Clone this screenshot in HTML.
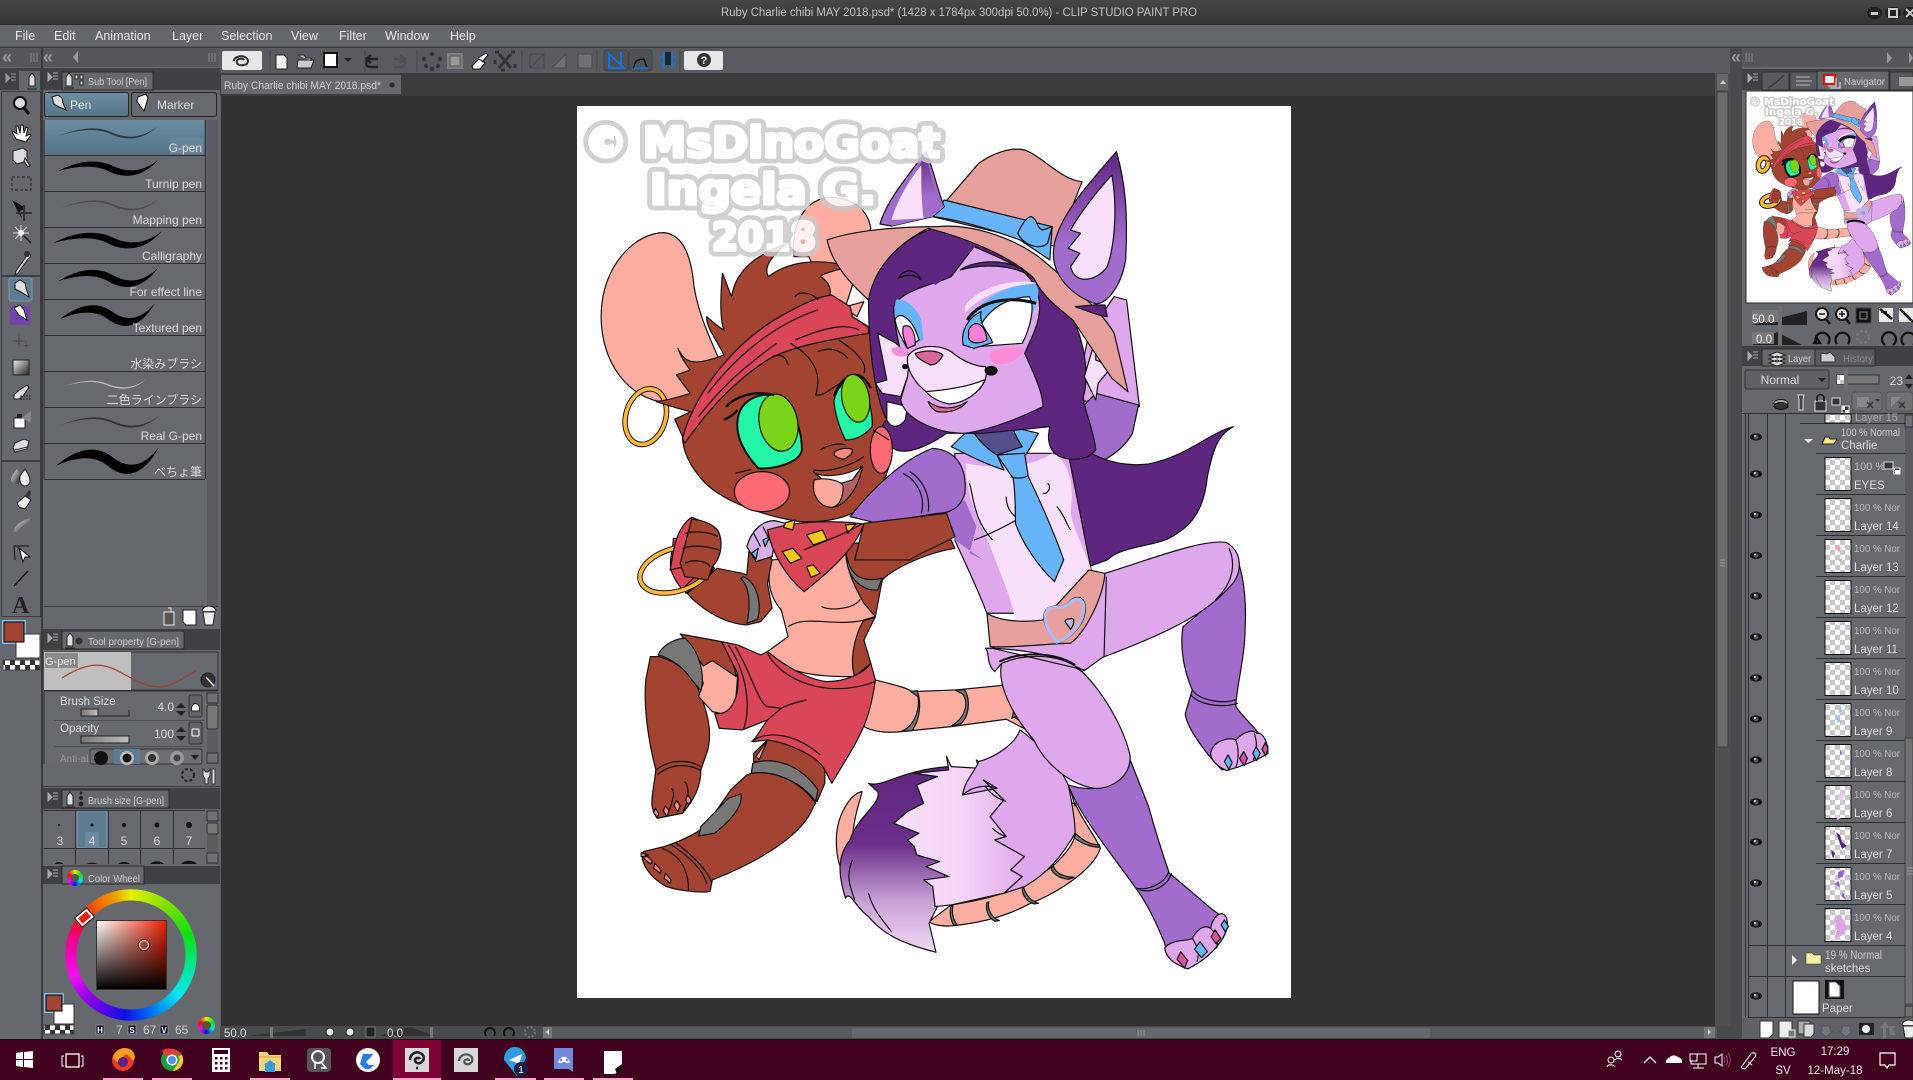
<!DOCTYPE html>
<html><head><meta charset="utf-8"><title>CLIP STUDIO PAINT PRO</title>
<style>
html,body{margin:0;padding:0;background:#5f6166;width:1913px;height:1080px;overflow:hidden}
svg{position:absolute;left:0;top:0}
text{font-family:"Liberation Sans","Noto Sans CJK JP",sans-serif;font-size:12px;fill:#d8d8d8}
.m{font-size:12.5px;fill:#e8e8e8}
.s{font-size:10px;fill:#c8c8c8}
.l{font-size:12px;fill:#dcdcdc}
.r{text-anchor:end}
.n{font-size:10.5px;fill:#bdbdbd}
.w{font-family:"DejaVu Sans",sans-serif;font-weight:bold;fill:#fff;stroke:#c9c9c9;paint-order:stroke;stroke-linejoin:round}
.w2{font-family:"DejaVu Sans",sans-serif;font-weight:bold;fill:#fff;stroke:#fff;stroke-linejoin:round}
#art *{vector-effect:non-scaling-stroke;stroke-linejoin:round}
#art{stroke:#111}
.wheel{position:absolute;border-radius:50%}
</style></head><body>
<svg width="1913" height="1080" viewBox="0 0 1913 1080" xmlns="http://www.w3.org/2000/svg">
<defs>
<linearGradient id="ts" x1="0" x2="0" y1="0" y2="1"><stop offset="0" stop-color="#474747"/><stop offset="1" stop-color="#343434"/></linearGradient>
<linearGradient id="gs" x1="0" x2="0" y1="0" y2="1"><stop offset="0" stop-color="#6d8ea2"/><stop offset="1" stop-color="#547488"/></linearGradient>
<linearGradient id="earg" x1="0" x2="0" y1="0" y2="1"><stop offset="0" stop-color="#5f2680"/><stop offset=".6" stop-color="#a26ccc"/><stop offset="1" stop-color="#a26ccc"/></linearGradient>
<linearGradient id="td" x1="0" x2="0" y1="0" y2="1"><stop offset="0" stop-color="#5f2680"/><stop offset=".42" stop-color="#6a2f88"/><stop offset=".72" stop-color="#c7a0d6"/><stop offset="1" stop-color="#f0d8f2"/></linearGradient>
<linearGradient id="tl" x1="0" x2="1" y1="0" y2="0"><stop offset="0" stop-color="#f8dffa"/><stop offset=".55" stop-color="#f4d4f6"/><stop offset="1" stop-color="#e0a8ec"/></linearGradient>
<linearGradient id="gray" x1="0" x2="1" y1="0" y2="1"><stop offset="0" stop-color="#eee"/><stop offset="1" stop-color="#222"/></linearGradient>
<linearGradient id="sl" x1="0" x2="1" y1="0" y2="0"><stop offset="0" stop-color="#777"/><stop offset="1" stop-color="#c0c0c0"/></linearGradient>
<pattern id="ck" width="10" height="10" patternUnits="userSpaceOnUse"><rect width="10" height="10" fill="#fff"/><rect width="5" height="5" fill="#c8c8c8"/><rect x="5" y="5" width="5" height="5" fill="#c8c8c8"/></pattern>
<pattern id="ck2" width="10" height="10" patternUnits="userSpaceOnUse"><rect width="10" height="10" fill="#fff"/><rect width="5" height="5" fill="#333"/><rect x="5" y="5" width="5" height="5" fill="#333"/></pattern>
<path id="st1" d="M0 11C25 2 40 1 55 8C70 14 85 13 100 1C85 15 70 16 55 10C40 3 25 3.500 0 11Z"/>
<path id="st2" d="M0 11C22 0 40-1 55 6C70 13 85 12 100 0C85 17 68 19 52 12C40 5 22 5 0 11Z"/>
<g id="eye"><ellipse rx="6" ry="3.6" fill="#111"/><circle r="2.4" fill="#555"/><circle cx="-1" cy="-1" r=".9" fill="#fff"/></g>
<g id="art">
<g transform="translate(570,100) scale(.4592,.3333)">
<!-- raised arm behind head -->
<path fill="#e0a8ec" d="M1185 590L1212 600L1240 920L1100 900L1130 700Z"/>
<path fill="#a26ccc" d="M1145 880L1238 915L1225 1000C1200 1060 1150 1100 1085 1115L1060 1000Z"/>
<!-- back hair -->
<path fill="#5f2680" d="M1090 1020C1130 1060 1180 1105 1260 1092C1340 1072 1390 1000 1445 980C1410 1005 1400 1050 1388 1130C1380 1250 1340 1290 1300 1318C1260 1340 1200 1340 1170 1380L1130 1400L1090 1230L1060 1080Z"/>
<!-- back ear of mouse -->
<path fill="#feaea0" d="M488 470C480 380 510 292 570 292C625 295 650 340 655 385L600 620L640 605L625 650L560 590L520 470Z"/>
<!-- big ear -->
<path fill="#feaea0" d="M195 905C110 880 65 760 68 640C70 500 140 398 205 398C250 405 265 480 270 560C280 640 300 700 322 770L270 890Z"/>
<!-- hoop -->
<ellipse cx="165" cy="950" rx="44" ry="84" transform="rotate(8 165 950)" fill="none" stroke="#111" stroke-width="5.5"/>
<ellipse cx="165" cy="950" rx="44" ry="84" transform="rotate(8 165 950)" fill="none" stroke="#fcb83f" stroke-width="3.6"/>
<g transform="translate(0,1320)">
<!-- mouse tail -->
<path fill="#feaea0" d="M665 420C690 430 730 440 745 455L840 450L945 436C960 480 972 520 965 530C980 540 985 550 995 570L950 538L830 560L720 575C690 580 660 575 640 560Z"/>
<path fill="#777" d="M742 455L758 470C762 510 750 560 720 575L745 572C762 540 766 490 756 452Z"/>
<path fill="#777" d="M838 450L855 462C870 490 860 535 830 558L850 552C870 530 872 480 860 450Z"/>
<path fill="#777" d="M942 436C965 470 970 510 962 535L972 530C975 500 965 450 950 436Z"/>
<path fill="#feaea0" d="M1100 790C1115 840 1140 880 1155 925C1140 990 1060 1060 1000 1092C950 1130 890 1150 830 1158C800 1160 785 1150 782 1145L830 1095C900 1080 970 1060 1040 990C1070 960 1100 910 1100 880L1090 790Z"/>
<path fill="#feaea0" d="M636 755C610 760 580 830 580 900C580 940 585 970 590 985L615 900C618 830 630 790 636 755Z"/>
<path fill="#777" d="M1102 882C1120 905 1135 915 1153 915L1152 922C1130 920 1110 908 1098 892Z"/>
<path fill="#777" d="M1052 978C1058 1000 1075 1012 1098 1012L1085 1018C1065 1015 1050 1000 1048 985Z"/>
<path fill="#777" d="M988 1042C992 1065 1005 1085 1020 1090L1010 1092C995 1085 985 1065 985 1048Z"/>
<path fill="#777" d="M912 1086C908 1110 920 1135 935 1142L925 1144C908 1130 905 1105 908 1088Z"/>
<path fill="#777" d="M834 1098C830 1120 836 1145 844 1156L836 1156C828 1140 826 1115 830 1098Z"/>
<!-- right leg of Charlie -->
<path fill="#a26ccc" d="M1435 20C1460 50 1475 150 1470 270C1470 350 1450 450 1450 500C1470 540 1500 570 1520 620C1510 650 1450 680 1420 690C1390 650 1340 560 1340 520L1355 450C1330 370 1330 300 1335 260C1400 190 1440 130 1435 20Z"/>
<path fill="none" d="M1355 450C1370 480 1420 495 1452 478M1352 465C1370 495 1420 505 1454 490"/>
<path fill="#e0a8ec" d="M1395 640C1400 600 1440 590 1450 600C1470 570 1490 570 1495 580C1510 575 1520 610 1520 640C1500 660 1460 680 1430 692C1410 680 1395 660 1395 640Z"/>
<path fill="none" d="M1450 600C1458 630 1455 665 1450 682M1490 580C1498 610 1495 640 1488 660"/>
<path fill="#6ab4fa" d="M1433 645L1442 668L1435 688L1425 665Z"/><path fill="#d8529c" d="M1467 635L1475 655L1468 678L1458 655Z"/><path fill="#6ab4fa" d="M1494 620L1503 640L1495 662L1487 640Z"/><path fill="#d8529c" d="M1514 608L1520 625L1515 648L1507 628Z"/>
<path fill="#e0a8ec" d="M1165 100C1260 60 1380-5 1430 8C1470 40 1460 110 1440 135C1400 200 1340 260 1160 352L1120 392C1050 340 990 330 920 325Z"/>
<path fill="none" d="M1168 110L1163 350M1435 25C1450 70 1445 130 1405 180"/>
<!-- Charlie tail -->
<path fill="url(#td)" d="M650 730C680 745 720 690 825 680L860 750L800 1100L782 1150L797 1237C720 1210 680 1180 650 1130C620 1100 610 1050 600 1075C585 1010 580 950 610 900C625 830 680 790 670 755Z"/>
<path fill="url(#tl)" d="M820 650L830 680L890 685L885 660L910 690L950 650L900 720L945 780L915 830L950 890L925 900L990 950L960 990L985 1010L945 1060L830 1095L795 1100L790 1040L770 1020L825 1010L775 980L805 965L755 945L750 920L735 900L760 880L705 850L735 815L770 790L755 735L800 710L750 700L825 690Z"/>
<path fill="#e0a8ec" d="M980 570C1040 630 1070 690 1085 735C1095 800 1100 850 1100 880C1070 950 1040 1000 990 1040L945 1060L985 1010L960 990L990 950L925 900L950 890L915 830L945 780L900 720L930 745L855 765C860 720 880 700 890 665C930 650 970 610 980 570Z" />
<path fill="none" d="M855 765C880 735 910 735 930 745M905 740C920 770 940 780 950 785M920 865C930 880 940 885 950 890"/>
<path fill="none" d="M650 1060C660 1110 680 1140 700 1175M615 960C600 1010 610 1040 620 1080"/>
<!-- Charlie front leg -->
<path fill="#a26ccc" d="M1085 735C1130 755 1190 755 1220 660L1260 800C1280 900 1300 980 1305 1000C1350 1050 1390 1100 1400 1110L1430 1140C1440 1180 1400 1250 1345 1285C1310 1270 1300 1250 1295 1210C1280 1160 1260 1100 1240 1060C1190 960 1110 830 1085 735Z"/>
<path fill="none" d="M1240 1050C1270 1060 1300 1040 1310 1000M1232 1045C1262 1052 1295 1030 1304 995M1100 800L1090 750"/>
<path fill="#e0a8ec" d="M1295 1225C1310 1195 1350 1205 1355 1195C1370 1160 1385 1155 1395 1165C1400 1130 1420 1105 1430 1135C1440 1180 1400 1250 1345 1287C1310 1270 1298 1250 1295 1225Z"/>
<path fill="none" d="M1355 1195C1370 1225 1370 1250 1365 1265M1395 1165C1410 1185 1412 1210 1408 1225"/>
<path fill="#d8529c" d="M1330 1235L1345 1262L1338 1285L1322 1258Z"/><path fill="#6ab4fa" d="M1372 1205L1388 1235L1375 1253L1360 1228Z"/><path fill="#d8529c" d="M1405 1170L1417 1195L1407 1212L1396 1190Z"/><path fill="#6ab4fa" d="M1425 1140L1434 1160L1427 1175L1418 1155Z"/>
<path fill="#e0a8ec" d="M940 370C1000 330 1080 360 1115 395C1170 470 1210 580 1220 650C1220 720 1170 750 1140 745C1080 730 1030 660 1010 600C960 520 930 430 940 370Z"/>
<path fill="#e0a8ec" d="M920 325L1120 390L1115 395C1080 345 1000 335 940 370L925 395C905 370 915 340 905 325Z"/>
<path fill="none" stroke-width="2" d="M935 365C990 330 1060 340 1100 375"/>
<!-- Ruby lower legs -->
<path fill="#a24431" d="M175 350L195 350C240 370 270 410 280 450C300 520 310 570 300 630L285 690C285 740 270 780 245 820L190 835C170 800 180 770 187 690C170 600 160 500 165 420Z"/>
<path fill="none" d="M187 690C220 655 260 660 285 680M190 705C220 668 260 672 285 692M215 815C225 780 230 750 220 745M245 820C260 780 260 740 250 725"/>
<path fill="#fd8a90" d="M256 765L264 780L258 795L252 780Z M232 782L240 797L235 815L226 797Z M208 798L216 812L211 830L203 812Z M186 805L193 820L190 834L182 818Z"/>
<path fill="#feaea0" d="M280 370L325 305L365 410L358 530L310 515L280 470L290 430Z"/>
<path fill="#a24431" d="M240 282L330 305C350 340 360 390 362 410L310 362L290 378L250 300Z"/>
<path fill="#777" d="M192 345C205 305 240 295 250 295C280 330 295 400 285 452L265 420C250 385 220 355 192 345Z"/>
<path fill="#a24431" d="M400 640L430 600C500 610 540 650 555 690L555 730L538 785C500 700 440 670 400 665Z"/>
<path fill="#feaea0" d="M405 650L430 600L412 660Z"/>
<path fill="#a24431" d="M395 700C440 690 500 720 535 790L530 800C510 880 420 960 310 1020L305 1055C280 1060 230 1050 210 1040C170 1010 150 960 160 935L205 920C250 900 290 870 300 850L350 750L385 705Z"/>
<path fill="#777" d="M398 670C440 650 500 670 540 750L535 785C500 720 440 690 395 700Z"/>
<path fill="#777" d="M372 762C378 800 350 840 315 880L280 888L285 860L345 775Z"/>
<path fill="none" d="M230 908C270 950 300 990 308 1028M218 912C260 950 290 990 298 1032M200 925C240 945 258 990 258 1050"/>
<path fill="#fd8a90" d="M185 970L198 990L197 1000L182 985Z M208 1000L220 1020L218 1030L205 1015Z M165 945L180 965L175 972L160 955Z M155 938L170 945L170 950L155 950Z"/>
<!-- Ruby torso -->
<path fill="#a24431" d="M600 10L830 0L838 25C770 40 700 90 680 120L665 230L640 300L655 370L620 410L600 350L600 100Z"/>
<path fill="#feaea0" d="M440 60C430 100 428 160 460 210L475 290L430 335C450 380 500 410 600 410L620 410C610 370 615 300 640 240L665 230L640 190C620 140 605 100 600 40Z"/>
<path fill="none" d="M548 200C570 215 620 205 632 178M475 260C520 220 580 270 665 232M600 10C600 60 610 110 650 148L680 118"/>
<path fill="#777" d="M603 50C610 100 630 130 680 115L670 150C630 155 600 100 603 50Z"/>
<path fill="#d94657" d="M330 305L365 315L415 345L430 335C470 380 520 420 560 425C600 425 640 400 655 370L665 420C655 520 640 570 605 650L570 730L555 690C540 650 480 610 430 600L398 605L430 540L375 570L325 565L315 520C355 530 370 460 365 400C350 360 340 330 330 305Z"/>
<path fill="none" d="M430 340C460 420 560 480 665 425M395 605C430 570 490 580 545 645M460 505C480 490 500 485 515 480M345 315C385 400 395 500 378 568M360 320C395 400 410 490 430 500L460 505L430 540"/>
<path fill="#a24431" d="M385 105L375 100L320 85L300 110L255 160C280 200 330 250 385 255L415 245L440 205L430 130L440 60L420-5L392 0Z"/>
<path fill="#777" d="M378 110C410 130 418 200 408 238L385 250C395 190 390 140 372 115Z"/>
<path fill="#d94657" d="M252 160C275 140 300 110 315 85L302 70L250 140ZM220 90C230 130 245 150 255 160L295 100L300-5L225-5C225 30 215 60 220 90Z"/>
<ellipse cx="230" cy="90" rx="60" ry="85" transform="rotate(55 230 90)" fill="none" stroke="#111" stroke-width="5.5"/>
<ellipse cx="230" cy="90" rx="60" ry="85" transform="rotate(55 230 90)" fill="none" stroke="#fcb83f" stroke-width="3.6"/>
</g>
<!-- fist top portion -->
<path fill="#d94657" d="M218 1410C225 1370 225 1290 265 1252L280 1260L250 1400Z"/>
<path fill="#a24431" d="M240 1390L265 1258C295 1260 320 1280 325 1300C335 1340 325 1380 310 1400L300 1440L250 1430Z"/>
<path fill="none" d="M250 1300C280 1290 310 1300 322 1310M245 1345C280 1330 310 1345 325 1350M250 1390C270 1375 300 1385 305 1400"/>
<!-- Ruby head -->
<path fill="#a24431" d="M245 1010L228 958C240 950 250 945 262 935C235 925 210 915 188 905C215 900 240 890 262 880C250 860 240 840 232 825L262 810C250 790 240 765 235 745C250 790 270 800 335 765C320 720 295 680 298 650C310 665 322 680 335 690C325 650 328 580 332 520C340 545 345 570 352 590C360 520 395 470 470 432C440 470 420 500 432 530C470 490 530 470 612 500C580 510 550 520 545 530C565 545 570 570 565 590L610 620L615 650L650 680L660 760L670 830C690 900 700 1000 700 1060C695 1130 670 1180 640 1220C610 1250 560 1270 500 1265C430 1250 340 1210 295 1150C260 1100 245 1050 245 1010Z"/>
<path fill="#d94657" d="M245 1015C270 880 360 720 470 640C510 610 540 590 570 585L610 620L615 650L650 682L650 700C560 720 480 740 430 780C350 850 290 950 250 1030Z"/>
<path fill="none" d="M300 880C350 790 430 680 540 630M280 950C330 860 380 800 450 730M490 720C560 680 600 670 630 690"/>
<path fill="none" d="M480 730C530 770 550 820 535 885C555 890 570 860 590 850M585 720C620 750 650 790 640 820M440 770C460 760 470 770 475 795M540 755C565 740 590 750 605 775M490 590C500 570 530 580 540 600"/>
<path fill="#24f5a6" d="M365 960C370 900 410 880 440 885C480 900 505 980 505 1050C500 1090 440 1110 410 1105C380 1060 360 1010 365 960Z" stroke-width="2"/>
<ellipse cx="454" cy="968" rx="42" ry="86" transform="rotate(-6 454 968)" fill="#7ad41a"/>
<path fill="none" stroke-width="2.4" d="M340 920C360 890 400 870 445 885M335 960C350 950 360 940 365 930M575 890C585 850 600 825 625 825C640 830 650 850 655 865"/>
<path fill="#24f5a6" d="M575 900C585 850 610 825 625 830C650 860 660 950 658 980C640 1010 620 1020 600 1020C585 980 575 930 575 900Z"/>
<ellipse cx="622" cy="895" rx="30" ry="72" transform="rotate(-6 622 895)" fill="#7ad41a"/>
<path fill="none" d="M545 1050C570 1030 590 1030 600 1035M530 1110C570 1120 620 1090 640 1070"/>
<path fill="#fd8a80" d="M575 1060C580 1045 610 1040 615 1050C615 1065 600 1075 595 1078C585 1075 575 1070 575 1060Z"/>
<path fill="#fff" d="M530 1115C545 1135 600 1130 637 1098L615 1150L560 1150Z"/>
<path fill="#b06060" d="M637 1098C630 1160 600 1220 570 1222L590 1150L615 1140Z"/>
<path fill="#fda89a" d="M532 1140C560 1130 595 1145 595 1160C595 1195 585 1220 570 1222C540 1220 525 1180 532 1140Z"/>
<ellipse cx="418" cy="1175" rx="60" ry="60" fill="#fe6a74"/>
<!-- paw -->
<path fill="#d8b0e8" d="M385 1340C395 1290 420 1262 445 1262L470 1270L450 1300L440 1370L405 1385Z"/>
<path fill="none" d="M400 1300L415 1340M420 1280L435 1320"/>
<path fill="#6ab4fa" d="M395 1360L410 1345L405 1378Z M420 1320L435 1310L425 1340Z"/>
<!-- neck bandana -->
<path fill="#d94657" d="M430 1290C500 1260 580 1262 640 1272C620 1350 560 1420 510 1475C470 1430 440 1360 430 1290Z"/>
<path fill="#f6c71d" d="M470 1268L490 1260L485 1290L465 1282ZM515 1305L550 1290L560 1320L530 1335ZM462 1355L485 1345L505 1375L480 1390ZM515 1400L530 1395L545 1420L525 1432ZM600 1275L622 1272L605 1300Z"/>
<path fill="none" d="M510 1350C540 1330 590 1310 635 1272"/>
<!-- Charlie torso -->
<path fill="#e0a8ec" d="M838 1060L1085 1060L1135 1410L1130 1540L908 1540C880 1440 850 1360 838 1320Z"/>
<path fill="#f8dffa" d="M862 1090C930 1110 1010 1100 1050 1060C1080 1080 1100 1130 1090 1240C1100 1300 1130 1380 1135 1410C1120 1470 1080 1550 1030 1560L970 1568C965 1500 930 1400 910 1320C880 1240 860 1160 862 1090Z" stroke="none"/>
<path fill="none" d="M880 1320C920 1300 960 1270 985 1250M870 1150C880 1200 880 1260 920 1320M950 1190C950 1220 960 1240 970 1250M1040 1150C1050 1160 1040 1185 1030 1180M1060 1220C1075 1240 1080 1270 1090 1290"/>
<path fill="#a26ccc" d="M838 1320C830 1280 820 1260 808 1240L860 1200L885 1280L870 1360L900 1380Z" stroke="none"/>
<g transform="translate(0,1320)">
<path fill="#e8a09c" d="M908 220C930 240 980 250 1030 240L1130 90L1165 100C1160 180 1120 280 1090 310C1050 310 960 325 915 320Z"/>
<path fill="#e8a09c" stroke="#111" d="M1060 310C1040 280 1020 230 1040 205C1060 190 1075 205 1085 190C1100 160 1125 170 1122 210C1120 260 1085 300 1060 310Z"/>
<path fill="none" stroke="#b4b8ee" stroke-width="3.500" d="M1060 306C1042 278 1025 232 1042 208C1060 195 1075 208 1087 193C1100 168 1122 175 1118 210C1116 258 1084 296 1060 306Z"/>
<path fill="#b4b8ee" d="M1078 245C1080 232 1090 240 1092 235C1098 235 1100 250 1090 268Z"/>
</g>
<!-- tie -->
<path fill="#68b4fa" d="M930 1065C950 1080 980 1090 995 1060L1020 1000L960 980L860 1000L830 1040C860 1060 900 1090 945 1110Z"/>
<path fill="#68b4fa" d="M930 1065L990 1060L998 1130C1030 1220 1060 1320 1075 1380L1055 1445C1020 1400 985 1330 970 1270C970 1210 968 1160 965 1135Z"/>
<path fill="none" d="M960 1130C980 1140 995 1130 998 1125"/>
<path fill="#54508c" d="M880 1000L965 980C965 1000 985 1040 985 1040L930 1065C910 1050 890 1020 880 1000Z"/>
<!-- sleeve -->
<path fill="#a26ccc" d="M610 1250C650 1180 720 1080 790 1045C840 1050 865 1100 860 1180C850 1230 820 1240 800 1240L670 1270Z"/>
<path fill="none" d="M725 1120C755 1140 775 1190 765 1240M740 1115C770 1140 785 1190 780 1235"/>
<path fill="#a24431" d="M640 1270L820 1240L838 1310C800 1340 760 1360 740 1380L620 1380Z"/>
<!-- Charlie hair back / head -->
<path fill="#5f2680" d="M650 600C660 500 720 420 790 385L960 430L1090 640C1120 720 1130 820 1120 880C1110 900 1140 980 1145 1050C1130 1080 1085 1090 1055 1060C1040 1035 1040 1010 1045 980L900 1000L820 1000C790 1030 740 1065 710 1050C680 1030 670 980 690 960C660 880 650 720 650 600Z"/>
<path fill="#fff" d="M690 960C700 990 720 980 730 960L735 920L690 905Z" />
<path fill="#e0a8ec" d="M705 620C720 570 800 550 830 530L880 440L930 470C980 500 1010 530 1020 590C1030 650 1010 700 990 760C1010 820 1030 880 1030 920C970 960 910 990 860 1000C800 1000 730 960 720 900L735 830C720 760 705 680 705 620Z"/>
<path fill="#f8dffa" d="M665 850L690 840L670 700L710 730L740 770L735 830L720 890L680 880Z"/>
<path fill="#f8dffa" d="M1120 830L1145 715L1145 780L1180 800L1150 850L1145 900Z"/>
<path fill="#5f2680" d="M795 555C770 510 760 480 760 465C730 510 705 570 708 620C690 560 700 480 790 400L890 430C850 480 830 530 795 555Z" stroke="none"/>
<path fill="#5f2680" d="M850 510C880 480 960 470 1000 525C960 495 900 490 850 510Z"/>
<path fill="#5f2680" d="M715 535C730 500 755 510 765 540C750 520 730 525 715 535Z"/>
<path fill="#68b4fa" d="M860 700C860 640 920 560 1010 548C1030 570 1015 610 1005 650L885 740Z" stroke="none"/>
<path fill="#f8dffa" d="M860 620C880 570 960 530 1020 550C950 555 890 590 860 640Z" stroke="none"/>
<path fill="#fff" d="M885 740C880 680 920 595 1000 590C1015 620 1000 690 985 730Z"/>
<path fill="#68b4fa" d="M856 735C850 690 870 650 895 635C890 680 915 700 920 728L880 745Z"/>
<path fill="#fd7fd8" d="M868 690C880 655 905 670 908 720C895 730 875 735 868 715Z"/>
<path fill="#68b4fa" d="M710 600C725 590 755 620 765 660L770 720L730 745C715 700 700 650 710 600Z" stroke="none"/>
<path fill="#fff" d="M708 660C715 630 745 650 760 720L735 745C720 710 712 690 708 660Z"/>
<path fill="#fd7fd8" d="M726 680C740 670 752 690 752 735L735 745C728 720 722 700 726 680Z"/>
<path fill="none" stroke-width="3" d="M865 660C890 605 950 585 1015 610"/>
<path fill="#fd8cd8" stroke="none" d="M915 760C930 740 970 735 990 745C985 775 950 800 925 790C915 785 912 770 915 760Z"/>
<path fill="#fd8cd8" stroke="none" d="M700 745C715 735 740 745 738 760C730 775 700 775 700 745Z"/>
<path fill="#f8dffa" d="M735 770C750 735 800 730 830 755C860 790 890 800 905 800C915 850 880 900 830 905C780 900 730 830 735 770Z"/>
<path fill="#d8689c" d="M752 760C775 750 800 750 812 765C805 785 795 795 785 795C770 785 755 775 752 760Z"/>
<circle cx="917" cy="812" r="13" fill="#111"/><circle cx="730" cy="800" r="6" fill="#111"/>
<path fill="#fff" d="M775 875C820 870 870 860 905 838C890 880 860 910 825 912C800 905 785 890 775 875Z"/>
<path fill="#d8689c" d="M780 905C800 925 830 935 865 905C850 930 825 940 800 935C790 930 782 915 780 905Z"/>
<path fill="#e8a09c" d="M790 350L890 190C920 160 960 140 990 150C1030 170 1070 240 1115 245L1060 440Z"/>
<path fill="#68b4fa" d="M815 300L1050 380L1045 480L980 420C920 390 850 360 790 350Z"/>
<path fill="#e8a09c" d="M560 420C620 390 720 380 800 380C870 370 960 410 1020 470C1100 560 1160 640 1185 700L1215 875L1180 835L1095 660C1060 620 1030 590 1010 535C970 480 880 420 780 385C700 440 660 520 650 600C610 550 570 490 560 420Z"/>
<path fill="#68b4fa" d="M975 400C985 370 995 350 1005 350C1020 360 1015 385 1030 390L1050 380L1040 430C1025 450 990 440 975 400Z"/>
<path fill="#5f2680" d="M1100 620C1140 640 1160 650 1170 650L1165 615L1140 615Z"/>
<path fill="#a26ccc" d="M675 372C690 300 740 220 775 155C790 200 800 270 815 320L790 350L700 378Z"/>
<path fill="url(#earg)" stroke="none" d="M715 330C730 260 760 210 775 155C785 220 795 290 815 320L790 350L700 378Z"/>
<path fill="#f8dffa" d="M700 360C715 290 745 230 765 195C765 250 765 310 770 355Z" stroke="none"/>
<path fill="url(#earg)" d="M1055 430C1070 340 1130 250 1190 155C1210 250 1215 340 1210 480C1200 560 1170 610 1145 612C1100 590 1040 530 1055 430Z"/>
<path fill="#f8dffa" d="M1090 500L1110 460L1085 445L1112 400L1090 390C1110 340 1150 270 1180 225C1190 300 1190 420 1170 500C1150 540 1100 560 1090 500Z"/>
<ellipse cx="678" cy="1050" rx="24" ry="70" fill="#fe6a74"/>
<path fill="none" d="M360 1120L395 1108M660 990L695 1020"/>
</g>
</g>
</defs>

<!-- top -->
<rect width="1913" height="24" fill="url(#ts)"/>
<text x="721" y="16" textLength="476" lengthAdjust="spacingAndGlyphs" style="fill:#c4c4c4;font-size:11.500px">Ruby Charlie chibi MAY 2018.psd* (1428 x 1784px 300dpi 50.0%)  -  CLIP STUDIO PAINT PRO</text>
<g><rect x="1867" y="7" width="15" height="12" rx="6" fill="#222"/><rect x="1871" y="12" width="7" height="3" fill="#ccc"/><rect x="1885" y="7" width="16" height="12" rx="6" fill="#222"/><rect x="1889" y="9" width="8" height="8" fill="none" stroke="#ccc" stroke-width="2"/><rect x="1903" y="7" width="15" height="12" rx="6" fill="#222"/><path d="M1906 9l8 8m0-8l-8 8" stroke="#ccc" stroke-width="2"/></g>
<rect y="24" width="1913" height="23" fill="#64676c"/><rect y="24" width="1913" height="1" fill="#2a2a2a"/><rect y="46.5" width="1913" height="1.5" fill="#3c3c3c"/>
<text class="m" x="15" y="40">File</text><text class="m" x="54" y="40">Edit</text><text class="m" x="95" y="40">Animation</text><text class="m" x="172" y="40">Layer</text><text class="m" x="221" y="40">Selection</text><text class="m" x="291" y="40">View</text><text class="m" x="339" y="40">Filter</text><text class="m" x="385" y="40">Window</text><text class="m" x="450" y="40">Help</text>

<!-- cmd strips -->
<rect y="48" width="41" height="19" fill="#54565a"/>
<rect x="43" y="48" width="176" height="19" fill="#54565a"/>
<rect x="220" y="48" width="1510" height="25" fill="#595b60"/>
<rect x="1730" y="48" width="183" height="19" fill="#54565a"/>
<rect x="1730" y="48" width="12" height="1032" fill="#494a4c"/>
<text x="2" y="63" style="font-size:18px;fill:#999;font-weight:bold">«</text><text x="43" y="63" style="font-size:18px;fill:#999;font-weight:bold">«</text><path d="M78 51l-5 6 5 6z" fill="#999"/>
<text x="1731" y="63" style="font-size:18px;fill:#999;font-weight:bold">«</text><path d="M1887 52l5 6-5 6zM1909 52l4 6-4 6z" fill="#999"/>
<path d="M31 53v9m3-9v9m3-9v9M209 53v9m3-9v9m3-9v9M1746 53v9m3-9v9m3-9v9" stroke="#888"/>

<!-- cmd icons -->
<rect x="222" y="51" width="40" height="19" rx="2" fill="#e8e8e8"/>
<path d="M234 61c0-4 7-6 11-4 4 2 4 7-1 8s-8-1-7-4 6-3 7-1" fill="none" stroke="#333" stroke-width="2"/>
<path d="M276 55h8l3 3v11h-11z" fill="#f4f4f4" stroke="#222"/><path d="M298 60h16l-3 8h-14zM298 55h6l2 3h5v3" fill="#ccc" stroke="#222"/>
<rect x="324" y="53" width="13" height="14" fill="#fff" stroke="#111" stroke-width="2"/><path d="M344 58h8l-4 4z" fill="#222"/>
<path d="M378 59h-8a4 4 0 0 0 0 8h8M371 55l-5 4 5 4" fill="none" stroke="#222" stroke-width="2.5"/><path d="M393 59h8a4 4 0 0 1 0 8h-8M400 55l5 4-5 4" fill="none" stroke="#4f5155" stroke-width="2.5"/>
<g fill="#333"><circle cx="432" cy="54" r="2.2"/><circle cx="424" cy="59" r="2.2"/><circle cx="440" cy="59" r="2.2"/><circle cx="426" cy="66" r="2.2"/><circle cx="438" cy="66" r="2.2"/><circle cx="432" cy="69" r="2.2"/></g>
<rect x="447" y="53" width="16" height="16" fill="#7b7d80"/><rect x="450" y="56" width="10" height="10" fill="#999" stroke="#555"/>
<path d="M472 66l7-7 6 4-5 6h-7zM478 58l8-5 2 2-6 7" fill="#fff" stroke="#111"/>
<path d="M499 54l12 14M511 54l-12 14" stroke="#333" stroke-width="3"/><rect x="495" y="52" width="20" height="18" fill="none" stroke="#333" stroke-width="3" stroke-dasharray="4 12"/>
<g fill="#6e7074" stroke="#4a4b4e"><rect x="530" y="54" width="14" height="14" fill="none"/><path d="M530 68l14-14"/><path d="M552 68l14-14v14z"/><rect x="578" y="54" width="14" height="14"/></g>
<rect x="604" y="50" width="24" height="21" rx="3" fill="#4f5255" stroke="#444"/><path d="M609 54v14h15zM621 52v13" fill="none" stroke="#0a78e8" stroke-width="1.8"/>
<rect x="629" y="50" width="23" height="21" rx="3" fill="#4f5255" stroke="#444"/><path d="M634 68c0-7 4-9 10-9l3 9z" fill="none" stroke="#111" stroke-width="1.5"/><path d="M634 68h14" stroke="#0a78e8" stroke-width="1.8"/>
<path d="M660 57h16M660 64h16M664 52v17M672 52v17" stroke="#0a78e8" stroke-width="1.6"/><path d="M665 52h6v13h-6z" fill="#222"/>
<rect x="684" y="51" width="39" height="19" rx="2" fill="#e8e8e8"/><circle cx="704" cy="60" r="7" fill="#333"/><text x="704" y="64" text-anchor="middle" style="font-size:11px;fill:#fff;font-weight:bold">?</text>
<path d="M365 50v22M417 50v22M522 50v22M597 50v22M680 50v22M270 50v22" stroke="#484a4d"/>

<!-- tab strip and canvas -->
<rect x="220" y="73" width="1495" height="23" fill="#3d3d3d"/>
<rect x="221" y="75" width="180" height="19" fill="#66686c"/>
<text x="224" y="89" textLength="157" lengthAdjust="spacingAndGlyphs" style="font-size:11px;fill:#d0d0d0">Ruby Charlie chibi MAY 2018.psd*</text>
<circle cx="392" cy="85" r="2.5" fill="#2a2a2a"/>
<rect x="221" y="96" width="1494" height="931" fill="#323232"/>
<rect x="577" y="106" width="714" height="892" fill="#fff"/>
<g stroke-width="1.2"><use href="#art"/></g>
<g opacity=".85">
<text class="w" x="584" y="157" textLength="356" lengthAdjust="spacingAndGlyphs" style="font-size:42px;stroke-width:13">© MsDinoGoat</text>
<text class="w" x="650" y="204" textLength="226" lengthAdjust="spacingAndGlyphs" style="font-size:42px;stroke-width:13">Ingela G.</text>
<text class="w" x="712" y="250" textLength="104" lengthAdjust="spacingAndGlyphs" style="font-size:38px;stroke-width:13">2018</text>
<text class="w2" x="584" y="157" textLength="356" lengthAdjust="spacingAndGlyphs" style="font-size:42px;stroke-width:3.500">© MsDinoGoat</text>
<text class="w2" x="650" y="204" textLength="226" lengthAdjust="spacingAndGlyphs" style="font-size:42px;stroke-width:3.500">Ingela G.</text>
<text class="w2" x="712" y="250" textLength="104" lengthAdjust="spacingAndGlyphs" style="font-size:38px;stroke-width:3.500">2018</text>
</g>
<!-- v scrollbar -->
<rect x="1715" y="73" width="15" height="954" fill="#4f5053"/>
<rect x="1717" y="74" width="11" height="16" fill="#66686c"/><path d="M1720 84l3-4 3 4z" fill="#ccc"/>
<rect x="1717" y="92" width="11" height="655" fill="#6a6c70" stroke="#3f4043"/>
<path d="M1720 560h5M1720 563h5M1720 566h5" stroke="#999"/>
<!-- bottom bar -->
<rect x="220" y="1026" width="1510" height="13" fill="#494a4d"/>
<path d="M246 1036l60-7v7zM380 1036l30-9 25 9z" fill="#333"/><rect x="270" y="1027" width="3" height="11" fill="#777"/><rect x="430" y="1027" width="3" height="11" fill="#777"/>
<text x="224" y="1037" style="font-size:11.5px;fill:#e0e0e0">50.0</text><text x="387" y="1037" style="font-size:11.5px;fill:#e0e0e0">0.0</text>
<circle cx="330" cy="1032" r="4" fill="#eee" stroke="#222"/><circle cx="350" cy="1032" r="4" fill="#eee" stroke="#222"/><rect x="366" y="1027" width="9" height="10" fill="#222" stroke="#777"/>
<path d="M486 1036a5 5 0 1 1 8 0M505 1036a5 5 0 1 1 8 0" fill="none" stroke="#111" stroke-width="2"/><circle cx="530" cy="1032" r="5" fill="none" stroke="#777" stroke-width="2" stroke-dasharray="2 2"/>
<rect x="543" y="1027" width="9" height="11" fill="#777"/><path d="M549 1029l-3 3 3 3z" fill="#ddd"/>
<rect x="552" y="1027" width="1165" height="11" fill="#585a5e"/><rect x="852" y="1028" width="578" height="10" fill="#66686d"/><path d="M1138 1030v6M1141 1030v6M1144 1030v6" stroke="#999"/>
<rect x="1704" y="1027" width="11" height="11" fill="#777"/><path d="M1708 1029l3 3-3 3z" fill="#ccc"/>

<!-- left toolbar -->
<rect y="67" width="41" height="973" fill="#65686c"/><rect x="41" y="48" width="2" height="992" fill="#3a3a3a"/>
<rect y="68" width="41" height="22" fill="#404144"/><rect x="19" y="71" width="21" height="19" fill="#65686c"/>
<path d="M6 74v8l4-4zM11 74h5M11 77h5M11 80h5" stroke="#999" fill="#999"/>
<path d="M32 73l-3 4v9h6v-9zM27 89h10" fill="#ddd" stroke="#222"/>
<g fill="none" stroke="#3c3d40"><rect x="1.5" y="91.5" width="39" height="184"/><rect x="1.5" y="276.5" width="39" height="184"/><rect x="1.5" y="461.5" width="39" height="155"/></g>
<circle cx="20" cy="103" r="6" fill="#ddd" stroke="#111" stroke-width="2"/><path d="M24 108l5 6" stroke="#111" stroke-width="3"/>
<path d="M16 139c-2-4-5-7-3-8l4 3-1-8 2 0 2 7 1-8 2 0 1 8 2-6 2 1-2 8 4-2 1 1-5 7z" fill="#fff" stroke="#111"/>
<path d="M13 151l10-3 4 3v10l-10 3-4-4z" fill="#ddd" stroke="#222"/><path d="M25 158l5 8-2 1-4-6z" fill="#fff" stroke="#111"/>
<rect x="12" y="177" width="19" height="13" fill="none" stroke="#222" stroke-dasharray="3 2"/>
<path d="M12 200l14 8-6 3 2 8-5-9z" fill="#111"/><path d="M24 205v16M16 213h16" stroke="#333" stroke-width="2"/>
<path d="M21 225v16M13 233h16M15 227l12 12M27 227l-12 12" stroke="#ddd"/><circle cx="21" cy="233" r="3" fill="#fff"/><path d="M23 235l8 8" stroke="#222" stroke-width="1.5"/>
<path d="M28 252l-2 5-10 14-1 4 3-2 10-14 3-3z" fill="#ddd" stroke="#222"/><circle cx="27" cy="254" r="3" fill="#333"/>
<rect x="9" y="278" width="23" height="23" rx="2" fill="#5d7c92" stroke="#7d99aa"/>
<path d="M15 283l5-3 5 3 1 5 3 9-8-5-6-3z" fill="#ddd" stroke="#111"/>
<rect x="10" y="306" width="20" height="19" fill="#7045a8"/><path d="M14 308l6-3 4 5 3 10-8-5z" fill="#fff" stroke="#111"/>
<path d="M19 333l1 7 7 1-7 1-1 7-1-7-7-1 7-1zM26 341l.6 4 4 .6-4 .6-.6 4-.6-4-4-.6 4-.6z" fill="#505256"/>
<rect x="13" y="360" width="16" height="15" fill="url(#gray)" stroke="#222"/>
<path d="M14 395l4-4 9-6 2 2-6 9-4 3h-5z" fill="#ddd" stroke="#222"/><path d="M20 399h11M20 396h11" stroke="#222" stroke-dasharray="2 1"/>
<rect x="14" y="418" width="11" height="10" fill="#fff" stroke="#222"/><rect x="17" y="414" width="5" height="4" fill="#222"/><path d="M22 418l9-7v12z" fill="#888"/>
<path d="M15 443l9-4 5 2-2 8-12 3-2-4z" fill="#ddd" stroke="#222"/><path d="M15 450l12-3" stroke="#222"/>
<path d="M17 469c-5 6-6 9-6 11a5 5 0 0 0 8 3c3-2 1-9-2-14z" fill="url(#gray)"/><path d="M25 469c-5 6-6 9-5 12a5 5 0 0 0 10 0c0-3-2-8-5-12z" fill="#eee" stroke="#222"/>
<path d="M17 503l8-7 6 4-6 9-6-2z" fill="#eee" stroke="#222"/><path d="M25 496l4-6 2 2-2 7" fill="#333"/>
<path d="M14 532c0-8 10-12 16-14v5c-6 1-10 4-12 9z" fill="url(#gray)"/>
<path d="M14 546h15M14 546l1 14M19 548l11 9-5 0-2 5z" fill="#fff" stroke="#111"/>
<path d="M14 586l14-15" stroke="#111" stroke-width="1.5"/>
<text x="12" y="613" style="font-family:'Liberation Serif',serif;font-size:24px;font-weight:bold;fill:#222">A</text>
<rect x="2" y="620" width="24" height="24" fill="#7ec1ea"/><rect x="16" y="634" width="24" height="24" fill="#fff" stroke="#333"/><rect x="4" y="622" width="20" height="20" fill="#a24431" stroke="#000"/>
<rect x="3" y="660" width="37" height="10" fill="url(#ck2)" stroke="#444"/>

<!-- sub tool panel -->
<rect x="43" y="67" width="177" height="973" fill="#65686d"/>
<rect x="43" y="68" width="177" height="22" fill="#404144"/>
<path d="M48 73v8l4-4zM53 73h5M53 76h5M53 79h5" stroke="#aaa" fill="#aaa"/>
<path d="M62 90v-18h91v18z" fill="#65686d" stroke="#2c2c2c"/>
<path d="M69 73l-3 4v9h6v-9zM64 88h10M75 75h3v4h-3zM80 75h3v4h-3zM80 81h3v4h-3z" fill="#ddd" stroke="#222"/>
<text x="88" y="85" textLength="59" lengthAdjust="spacingAndGlyphs" style="font-size:10.5px;fill:#cfcfcf">Sub Tool [Pen]</text>
<rect x="44.5" y="92.5" width="84" height="24" rx="2" fill="url(#gs)" stroke="#222"/><rect x="131.5" y="92.5" width="85" height="24" rx="2" fill="#66696e" stroke="#222"/>
<path d="M52 97l6-2 4 3 1 5 3 7-7-3-5-3z" fill="#ddd" stroke="#111"/><text x="70" y="109" style="font-size:12px;fill:#eee">Pen</text>
<path d="M138 97l8-3 2 4-4 13-4-5-3-5z" fill="#fff" stroke="#111"/><text x="157" y="109" style="font-size:12px;fill:#ddd">Marker</text>
<rect x="207" y="120" width="11" height="486" fill="#595b60"/>
<rect x="44" y="120" width="161" height="359" fill="#66696e"/>
<rect x="45" y="120" width="159" height="34" fill="url(#gs)"/><rect x="170" y="138" width="33" height="16" fill="#66859a"/>
<g stroke="#2e2f31"><path d="M44 155.500h161M44 191.500h161M44 227.500h161M44 263.500h161M44 299.500h161M44 335.500h161M44 371.500h161M44 407.500h161M44 443.500h161M44 479.500h161M44 120v359M205.500 120v359"/></g>
<use href="#st1" transform="translate(58,125)" fill="#2a3a44"/>
<use href="#st2" transform="translate(58,160)" fill="#000"/>
<use href="#st1" transform="translate(60,197)" fill="#4c4e52"/>
<use href="#st2" transform="translate(53,231) scale(1.09,1.1)" fill="#000"/>
<use href="#st2" transform="translate(58,268) scale(1,1.2)" fill="#000"/>
<use href="#st2" transform="translate(60,303) scale(.95,1.45)" fill="#000"/>
<use href="#st1" transform="translate(62,378) scale(.85,.8)" fill="#b8b8b8"/>
<use href="#st1" transform="translate(60,414)" fill="#333"/>
<use href="#st2" transform="translate(56,447) scale(1.03,1.7)" fill="#000"/>
<text class="l r" x="202" y="152">G-pen</text><text class="l r" x="202" y="188">Turnip pen</text><text class="l r" x="202" y="224">Mapping pen</text><text class="l r" x="202" y="260">Calligraphy</text><text class="l r" x="202" y="296">For effect line</text><text class="l r" x="202" y="332">Textured pen</text><text class="l r" x="202" y="368">水染みブラシ</text><text class="l r" x="202" y="404">二色ラインブラシ</text><text class="l r" x="202" y="440">Real G-pen</text><text class="l r" x="202" y="476">べちょ筆</text>
<rect x="43" y="606" width="177" height="23" fill="#65686d"/><path d="M44 606.500h174" stroke="#3f4043"/>
<path d="M164 612h10v13h-10zM168 608h3v4" fill="#555" stroke="#eee"/><path d="M183 610h13v15h-10l-3-3z" fill="#fff" stroke="#222"/><path d="M203 612h12l-2 13h-8zM202 611a7 5 0 0 1 14 0" fill="#eee" stroke="#222"/>

<!-- tool property -->
<rect x="43" y="629" width="177" height="21" fill="#404144"/>
<path d="M48 634v8l4-4zM53 634h5M53 637h5M53 640h5" stroke="#aaa" fill="#aaa"/>
<path d="M62 649v-18h122v18z" fill="#65686d" stroke="#2c2c2c"/>
<path d="M70 633l-3 4v9h6v-9zM65 648h10" fill="#ddd" stroke="#222"/><circle cx="79" cy="641" r="3.5" fill="#333"/>
<text x="88" y="645" textLength="91" lengthAdjust="spacingAndGlyphs" style="font-size:10.5px;fill:#cfcfcf">Tool property [G-pen]</text>
<rect x="44" y="652" width="174" height="38" fill="#66696e" stroke="#2e2f31"/><rect x="44" y="652" width="87" height="38" fill="#bfbfbf"/><rect x="45" y="653" width="33" height="15" fill="#8a8a8a"/>
<path d="M62 678c25-16 40-16 58-6s35 20 52 12c10-4 18-10 24-13" fill="none" stroke="#a04030" stroke-width="1.200"/>
<text x="45" y="665" style="font-size:11px;fill:#eee">G-pen</text>
<circle cx="208" cy="680" r="7" fill="#333" stroke="#222"/><path d="M206 677l8 9" stroke="#ddd" stroke-width="1.6"/>
<rect x="44" y="691" width="174" height="73" fill="#66696e"/><path d="M44 691h174M44 691v73" stroke="#2e2f31"/>
<rect x="207" y="692" width="11" height="72" fill="#5a5c60"/><rect x="207" y="693" width="11" height="10" fill="#6e7074" stroke="#333"/><rect x="207" y="705" width="11" height="24" rx="2" fill="#777" stroke="#333"/><rect x="207" y="753" width="11" height="10" fill="#6e7074" stroke="#333"/>
<text x="60" y="705" style="font-size:11.5px;fill:#ddd">Brush Size</text>
<rect x="81" y="708" width="48" height="8" fill="none" stroke="none"/><rect x="81" y="709" width="17" height="7" fill="url(#sl)" stroke="#222"/><path d="M98 716h31v-6" fill="none" stroke="#222"/>
<text class="r" x="174" y="711" style="font-size:12px;fill:#ddd">4.0</text><path d="M181 703l-5 5h10zM181 716l-5-5h10z" fill="#222"/>
<rect x="189" y="695" width="13" height="22" rx="2" fill="#606266" stroke="#333"/><path d="M192 711a4 5 0 1 1 7 0z" fill="#fff" stroke="#222"/>
<path d="M54 720.500h150" stroke="#4f5155"/>
<text x="60" y="732" style="font-size:11.5px;fill:#ddd">Opacity</text>
<rect x="81" y="736" width="48" height="7" fill="url(#sl)" stroke="#222"/>
<text class="r" x="174" y="738" style="font-size:12px;fill:#ddd">100</text><path d="M181 727l-5 5h10zM181 741l-5-5h10z" fill="#222"/>
<rect x="189" y="722" width="13" height="22" rx="2" fill="#606266" stroke="#333"/><rect x="192" y="729" width="7" height="7" rx="1" fill="#666" stroke="#fff"/>
<path d="M54 746.500h150" stroke="#4f5155"/>
<text x="60" y="762" style="font-size:10px;fill:#999">Anti-ali</text>
<rect x="90" y="749" width="112" height="15" rx="2" fill="#6c6e72" stroke="#333"/><rect x="114" y="749" width="26" height="15" fill="#5d7c92"/>
<circle cx="101" cy="758" r="7" fill="#111"/><circle cx="127" cy="758" r="7" fill="#bbb"/><circle cx="127" cy="758" r="4.5" fill="#111"/><circle cx="152" cy="758" r="7" fill="#aaa"/><circle cx="152" cy="758" r="4" fill="#333"/><circle cx="177" cy="758" r="7" fill="#999"/><circle cx="177" cy="758" r="3.500" fill="#444"/>
<path d="M191 755h8l-4 5z" fill="#222"/>
<circle cx="188" cy="775" r="6" fill="none" stroke="#222" stroke-width="2" stroke-dasharray="3 2"/>
<path d="M203 769v6c0 2 2 3 2 4v5h3v-5c0-1 2-2 2-4v-6l-2 3h-2zM212 769v15h3v-15z" fill="#ddd" stroke="#333"/>

<!-- brush size -->
<path d="M43 786.500h177" stroke="#3c3d40"/>
<rect x="43" y="788" width="177" height="21" fill="#404144"/>
<path d="M48 793v8l4-4zM53 793h5M53 796h5M53 799h5" stroke="#aaa" fill="#aaa"/>
<path d="M62 808v-18h107v18z" fill="#65686d" stroke="#2c2c2c"/>
<path d="M70 792l-3 4v9h6v-9zM65 807h10" fill="#ddd" stroke="#222"/><circle cx="81" cy="793" r="1.500" fill="#222"/><circle cx="81" cy="798" r="2" fill="#222"/><circle cx="81" cy="804" r="2.400" fill="#222"/>
<text x="88" y="804" textLength="76" lengthAdjust="spacingAndGlyphs" style="font-size:10.5px;fill:#cfcfcf">Brush size [G-pen]</text>
<rect x="44" y="810" width="161" height="54" fill="#66696e"/>
<rect x="77" y="811" width="30" height="37" rx="2" fill="#5d7c92" stroke="#7d99aa"/><rect x="85" y="832" width="14" height="15" fill="#6a8a9e"/>
<path d="M44 848.500h161M75.500 810v54M108.500 810v54M140.500 810v54M173.500 810v54M44 810.500h161" stroke="#2e2f31"/>
<circle cx="59" cy="825" r="1" fill="#111"/><circle cx="92" cy="825" r="1.500" fill="#111"/><circle cx="124" cy="825" r="2" fill="#111"/><circle cx="157" cy="825" r="2.500" fill="#111"/><circle cx="189" cy="825" r="3" fill="#111"/>
<text x="60" y="845" text-anchor="middle" style="font-size:12px">3</text><text x="92" y="845" text-anchor="middle" style="font-size:12px">4</text><text x="124" y="845" text-anchor="middle" style="font-size:12px">5</text><text x="157" y="845" text-anchor="middle" style="font-size:12px">6</text><text x="189" y="845" text-anchor="middle" style="font-size:12px">7</text>
<path d="M55 864a4 2 0 0 1 8 0zM87 864a6 3 0 0 1 10 0zM118 864a7 4 0 0 1 12 0zM150 864a8 5 0 0 1 14 0zM181 864a9 6 0 0 1 16 0z" fill="#111"/>
<rect x="207" y="810" width="11" height="54" fill="#5a5c60"/><rect x="207" y="811" width="11" height="10" fill="#6e7074" stroke="#333"/><rect x="207" y="823" width="11" height="11" rx="2" fill="#777" stroke="#333"/><rect x="207" y="853" width="11" height="10" fill="#6e7074" stroke="#333"/>

<!-- colour wheel panel -->
<rect x="43" y="866" width="177" height="18" fill="#404144"/>
<path d="M48 870v8l4-4zM53 870h5M53 873h5M53 876h5" stroke="#aaa" fill="#aaa"/>
<path d="M62 884v-18h82v18z" fill="#65686d" stroke="#2c2c2c"/>
<text x="88" y="882" textLength="52" lengthAdjust="spacingAndGlyphs" style="font-size:10.5px;fill:#cfcfcf">Color Wheel</text>
<rect x="44" y="993" width="20" height="20" fill="#7ec1ea"/>
<rect x="54" y="1004" width="20" height="20" fill="#fff" stroke="#333"/>
<rect x="46" y="995" width="16" height="16" fill="#a24431" stroke="#000"/>
<rect x="44" y="1025" width="30" height="9" fill="url(#ck2)" stroke="#444"/>
<rect x="96" y="1025" width="8" height="9" fill="#05052a" stroke="#888"/><text x="100" y="1033" text-anchor="middle" style="font-size:8px;fill:#fff;font-weight:bold">H</text>
<text x="116" y="1034" style="font-size:12px;fill:#ccc">7</text>
<rect x="128" y="1025" width="8" height="9" fill="#05052a" stroke="#888"/><text x="132" y="1033" text-anchor="middle" style="font-size:8px;fill:#fff;font-weight:bold">S</text>
<text x="143" y="1034" style="font-size:12px;fill:#ccc">67</text>
<rect x="160" y="1025" width="8" height="9" fill="#05052a" stroke="#888"/><text x="164" y="1033" text-anchor="middle" style="font-size:8px;fill:#fff;font-weight:bold">V</text>
<text x="175" y="1034" style="font-size:12px;fill:#ccc">65</text>

<!-- right: navigator -->
<rect x="1742" y="67" width="171" height="973" fill="#65686d"/>
<rect x="1742" y="69" width="171" height="21" fill="#404144"/>
<path d="M1748 74v8l4-4zM1753 74h5M1753 77h5M1753 80h5" stroke="#aaa" fill="#aaa"/>
<rect x="1762" y="72" width="27" height="18" fill="#585a5e" stroke="#333"/><path d="M1768 88c5-3 10-7 16-13" stroke="#3a3a3a" fill="none" stroke-width="1.5"/>
<rect x="1790" y="72" width="27" height="18" fill="#585a5e" stroke="#333"/><path d="M1796 77h14M1796 81h16M1796 85h14" stroke="#bbb"/>
<rect x="1817" y="71" width="72" height="19" fill="#65686d" stroke="#2c2c2c"/>
<rect x="1824" y="75" width="11" height="9" fill="#fff" stroke="#e00" stroke-width="2"/><path d="M1836 78v8h-8M1840 82v6h-10" fill="none" stroke="#eee"/>
<text x="1844" y="85" textLength="41" lengthAdjust="spacingAndGlyphs" style="font-size:10.5px;fill:#cfcfcf">Navigator</text>
<rect x="1890" y="72" width="23" height="18" fill="#585a5e" stroke="#333"/><rect x="1899" y="77" width="14" height="9" fill="#999"/>
<rect x="1746" y="91" width="167" height="212" fill="#fff" stroke="#2a2a2a"/>
<g stroke-width=".25" transform="translate(1610.500,65.900) scale(.2365)"><use href="#art"/></g>
<g opacity=".9"><text class="w" x="1750" y="105" textLength="84" lengthAdjust="spacingAndGlyphs" style="font-size:10px;stroke-width:3">© MsDinoGoat</text><text class="w" x="1765" y="115" textLength="53" lengthAdjust="spacingAndGlyphs" style="font-size:10px;stroke-width:3">Ingela G.</text><text class="w" x="1779" y="125" textLength="24" lengthAdjust="spacingAndGlyphs" style="font-size:9px;stroke-width:3">2018</text></g>
<path d="M1752 325l55-14v14zM1752 345l25-13 25 13z" fill="#222"/>
<rect x="1752" y="310" width="26" height="12" fill="#777"/><rect x="1752" y="332" width="22" height="12" fill="#777"/>
<text x="1752" y="323" style="font-size:11.5px;fill:#eee">50.0</text><text x="1756" y="343" style="font-size:11.5px;fill:#eee">0.0</text>
<rect x="1778" y="306" width="4" height="40" fill="#6e7074"/>
<circle cx="1822" cy="314" r="6" fill="#eee" stroke="#111" stroke-width="2"/><path d="M1826 319l4 5" stroke="#111" stroke-width="2.500"/><path d="M1819 314h6" stroke="#111" stroke-width="1.500"/>
<circle cx="1842" cy="314" r="6" fill="#eee" stroke="#111" stroke-width="2"/><path d="M1846 319l4 5" stroke="#111" stroke-width="2.500"/><path d="M1839 314h6M1842 311v6" stroke="#111" stroke-width="1.500"/>
<rect x="1856" y="308" width="15" height="15" fill="#111" stroke="#444"/><rect x="1860" y="312" width="7" height="7" fill="none" stroke="#888"/>
<path d="M1817 344a7 7 0 1 1 11 0M1817 338l-3 5h6zM1837 344a7 7 0 1 1 11 0" fill="none" stroke="#111" stroke-width="2.200"/>
<circle cx="1863" cy="337" r="6" fill="none" stroke="#777" stroke-width="2.500" stroke-dasharray="3 2"/>
<rect x="1879" y="308" width="14" height="14" fill="#e8e8e8"/><path d="M1880 309l12 10" stroke="#111" stroke-width="2.500"/><path d="M1881 312h6" stroke="#111" stroke-width="2"/>
<rect x="1899" y="308" width="14" height="14" fill="#e8e8e8"/><path d="M1900 309l13 13" stroke="#111" stroke-width="2.500"/>
<path d="M1885 345a7 7 0 1 1 8 0M1904 345a7 7 0 1 1 9 0" fill="none" stroke="#111" stroke-width="2.200"/>
<rect x="1742" y="346" width="171" height="2" fill="#3f4043"/>

<!-- layer panel -->
<rect x="1742" y="348" width="171" height="18" fill="#404144"/>
<path d="M1748 352v8l4-4zM1753 352h5M1753 355h5M1753 358h5" stroke="#aaa" fill="#aaa"/>
<path d="M1762 366v-17h53v17z" fill="#65686d" stroke="#2c2c2c"/>
<path d="M1769 355l8-3 8 3-8 3zM1769 359l8-3 8 3-8 3zM1769 363l8-3 8 3-8 3z" fill="#ddd" stroke="#222"/>
<text x="1788" y="362" textLength="23" lengthAdjust="spacingAndGlyphs" style="font-size:10.5px;fill:#cfcfcf">Layer</text>
<path d="M1815 366v-17h60v17z" fill="#585a5e" stroke="#2c2c2c"/><path d="M1821 362v-9l6 1 3-2 5 5v5z" fill="#ccc" stroke="#333"/>
<text x="1843" y="362" textLength="30" lengthAdjust="spacingAndGlyphs" style="font-size:10.5px;fill:#8a8a8a">History</text>
<rect x="1745" y="370" width="84" height="19" rx="2" fill="#5e6065" stroke="#333"/>
<text x="1780" y="384" text-anchor="middle" style="font-size:12px;fill:#ddd">Normal</text>
<path d="M1818 378h8l-4 4z" fill="#222"/>
<rect x="1837" y="375" width="42" height="9" fill="#777" stroke="#333"/><rect x="1837" y="375" width="8" height="9" fill="url(#ck)"/><rect x="1844" y="369" width="4" height="20" fill="#6e7074"/>
<text class="r" x="1903" y="385" style="font-size:12px;fill:#ddd">23</text><path d="M1909 374l-4 5h8zM1909 389l-4-5h8z" fill="#222"/>
<ellipse cx="1781" cy="403" rx="7" ry="3.500" fill="#aaa" stroke="#111"/><ellipse cx="1781" cy="406" rx="7" ry="3.500" fill="#333" stroke="#111"/>
<path d="M1798 395h6l-1 4v11h-4v-11z" fill="#444" stroke="#ddd"/><rect x="1815" y="401" width="11" height="10" fill="#333" stroke="#ddd"/><path d="M1817 401v-3a3.500 3.500 0 0 1 7 0v3" fill="none" stroke="#111" stroke-width="1.500"/>
<rect x="1832" y="398" width="8" height="7" fill="#333" stroke="#ddd"/><rect x="1842" y="406" width="7" height="7" fill="url(#ck2)" stroke="#eee"/>
<rect x="1852" y="392" width="30" height="19" rx="3" fill="#6e7074" stroke="#555"/><path d="M1857 397h12v10h-12z" fill="#888"/><path d="M1867 402l6 6m0-6l-6 6" stroke="#333" stroke-width="1.500"/><path d="M1875 399h5l-2 3z" fill="#333"/>
<rect x="1886" y="392" width="27" height="19" rx="3" fill="#6e7074" stroke="#555"/><path d="M1891 397h10l-10 10z" fill="#888"/><path d="M1899 402l6 6m0-6l-6 6" stroke="#333" stroke-width="1.500"/>
<path d="M1742 413.500h171" stroke="#2e2f31"/>
<rect x="1743" y="414" width="162" height="603" fill="#66696e"/>
<path d="M1745.500 414v603M1748.500 414v603M1767.500 414v603M1785.500 414v603" stroke="#2e2f31"/>
<path d="M1800 423.500h105M1816 453.500h89M1816 494.500h89M1816 535.500h89M1816 576.500h89M1816 617.500h89M1816 658.500h89M1816 699.500h89M1816 740.500h89M1816 781.500h89M1816 822.500h89M1816 863.500h89M1816 904.500h89M1748 945.500h157M1748 976.500h157M1748 1017.500h157" stroke="#2e2f31"/>
<rect x="1825" y="414" width="26" height="9" fill="url(#ck)" stroke="#111"/><text x="1855" y="421" style="font-size:11px;fill:#aaa">Layer 15</text>
<rect x="1905" y="414" width="8" height="603" fill="#595b60"/><rect x="1905" y="415" width="8" height="12" fill="#6e7074" stroke="#333"/><rect x="1905" y="738" width="8" height="266" fill="#6e7074" stroke="#444"/><rect x="1905" y="1006" width="8" height="11" fill="#6e7074" stroke="#333"/>
<path d="M1907 868h6M1907 871h6M1907 874h6" stroke="#999"/>
<use href="#eye" x="1756" y="437"/><use href="#eye" x="1756" y="474"/><use href="#eye" x="1756" y="515"/><use href="#eye" x="1756" y="555.500"/><use href="#eye" x="1756" y="596"/><use href="#eye" x="1756" y="637"/><use href="#eye" x="1756" y="678"/><use href="#eye" x="1756" y="719"/><use href="#eye" x="1756" y="760"/><use href="#eye" x="1756" y="802"/><use href="#eye" x="1756" y="842"/><use href="#eye" x="1756" y="883"/><use href="#eye" x="1756" y="924"/><use href="#eye" x="1756" y="996"/>
<!-- Charlie group -->
<path d="M1804 439h9l-4.500 4z" fill="#e8e8e8"/><path d="M1822 444l3-7h4l1 2h7l-3 5z" fill="#f4e88a" stroke="#222"/>
<text x="1841" y="436" textLength="59" lengthAdjust="spacingAndGlyphs" style="font-size:11px;fill:#ccc">100 % Normal</text><text x="1841" y="449" style="font-size:11.5px;fill:#ddd">Charlie</text>
<!-- layer rows -->
<g fill="url(#ck)" stroke="#111"><rect x="1825" y="457.500" width="26" height="33"/><rect x="1825" y="498.500" width="26" height="33"/><rect x="1825" y="539.500" width="26" height="33"/><rect x="1825" y="580.500" width="26" height="33"/><rect x="1825" y="621.500" width="26" height="33"/><rect x="1825" y="662.500" width="26" height="33"/><rect x="1825" y="703.500" width="26" height="33"/><rect x="1825" y="744.500" width="26" height="33"/><rect x="1825" y="785.500" width="26" height="33"/><rect x="1825" y="826.500" width="26" height="33"/><rect x="1825" y="867.500" width="26" height="33"/><rect x="1825" y="908.500" width="26" height="33"/></g>
<path d="M1835 545l6 3-2 5zM1838 560l5-2-3 4z" fill="#f0a0a0"/><path d="M1840 704l2 7-3 2zM1838 716l3 5-4 2z" fill="#88c0f8"/><path d="M1840 750l2 3-2 2z" fill="#9060c0"/>
<path d="M1840 792l4 2-2 8-4-3zM1836 815l5 3-4 2z" fill="#eec8ee"/><path d="M1836 832l4 3 2 7 5 4-5 3-3-8zM1831 850l4 3-2 6z" fill="#552288"/><path d="M1838 872l6-2-1 7-5 1zM1834 884l5-3 1 6zM1843 892l3 8-5-4z" fill="#9a60c8"/><path d="M1834 918l7-3 3 8 4 4-5 8-8 3 2-9z" fill="#e0a0e8"/>
<text x="1854" y="470" style="font-size:11px;fill:#bdbdbd">100 %</text><text x="1854" y="489" style="font-size:11.5px;fill:#ddd">EYES</text>
<rect x="1884" y="462" width="9" height="7" fill="#333" stroke="#ddd"/><rect x="1894" y="468" width="6" height="6" fill="url(#ck2)" stroke="#eee"/>
<text x="1854" y="511" class="n" textLength="46" lengthAdjust="spacingAndGlyphs">100 % Nor</text><text x="1854" y="530" style="font-size:11.5px;fill:#ddd">Layer 14</text>
<text x="1854" y="552" class="n" textLength="46" lengthAdjust="spacingAndGlyphs">100 % Nor</text><text x="1854" y="571" style="font-size:11.5px;fill:#ddd">Layer 13</text>
<text x="1854" y="593" class="n" textLength="46" lengthAdjust="spacingAndGlyphs">100 % Nor</text><text x="1854" y="612" style="font-size:11.5px;fill:#ddd">Layer 12</text>
<text x="1854" y="634" class="n" textLength="46" lengthAdjust="spacingAndGlyphs">100 % Nor</text><text x="1854" y="653" style="font-size:11.5px;fill:#ddd">Layer 11</text>
<text x="1854" y="675" class="n" textLength="46" lengthAdjust="spacingAndGlyphs">100 % Nor</text><text x="1854" y="694" style="font-size:11.5px;fill:#ddd">Layer 10</text>
<text x="1854" y="716" class="n" textLength="46" lengthAdjust="spacingAndGlyphs">100 % Nor</text><text x="1854" y="735" style="font-size:11.5px;fill:#ddd">Layer 9</text>
<text x="1854" y="757" class="n" textLength="46" lengthAdjust="spacingAndGlyphs">100 % Nor</text><text x="1854" y="776" style="font-size:11.5px;fill:#ddd">Layer 8</text>
<text x="1854" y="798" class="n" textLength="46" lengthAdjust="spacingAndGlyphs">100 % Nor</text><text x="1854" y="817" style="font-size:11.5px;fill:#ddd">Layer 6</text>
<text x="1854" y="839" class="n" textLength="46" lengthAdjust="spacingAndGlyphs">100 % Nor</text><text x="1854" y="858" style="font-size:11.5px;fill:#ddd">Layer 7</text>
<text x="1854" y="880" class="n" textLength="46" lengthAdjust="spacingAndGlyphs">100 % Nor</text><text x="1854" y="899" style="font-size:11.5px;fill:#ddd">Layer 5</text>
<text x="1854" y="921" class="n" textLength="46" lengthAdjust="spacingAndGlyphs">100 % Nor</text><text x="1854" y="940" style="font-size:11.5px;fill:#ddd">Layer 4</text>
<path d="M1792 955l5 5-5 5z" fill="#e8e8e8"/><path d="M1806 953h6l2 2h7v9h-15z" fill="#f4f0a0" stroke="#333" stroke-width=".5"/>
<text x="1825" y="959" textLength="57" lengthAdjust="spacingAndGlyphs" style="font-size:11.5px;fill:#ccc">19 % Normal</text><text x="1825" y="972" style="font-size:11.5px;fill:#ddd">sketches</text>
<rect x="1793" y="981" width="26" height="33" fill="#fff" stroke="#111"/>
<rect x="1825" y="980" width="19" height="19" fill="#111"/><path d="M1829 982h7l4 4v11h-11z" fill="#fff" stroke="#555"/>
<text x="1822" y="1012" style="font-size:11.5px;fill:#ddd">Paper</text>
<!-- bottom icons -->
<rect x="1742" y="1018" width="171" height="21" fill="#5f6166"/>
<path d="M1760 1021h13v13l-4 4h-9z" fill="#fff" stroke="#333"/><path d="M1779 1021h13v13l-4 4h-9z" fill="#eee" stroke="#333"/><rect x="1788" y="1030" width="7" height="7" fill="#777" stroke="#eee"/>
<rect x="1798" y="1021" width="12" height="13" fill="#aaa" stroke="#333"/><path d="M1804 1024h10v10l-3 3h-7z" fill="#ddd" stroke="#333"/>
<path d="M1822 1026h8v5h3l-7 6-7-6h3zM1842 1026h8v5h3l-7 6-7-6h3z" fill="#777" stroke="#555"/>
<rect x="1859" y="1023" width="15" height="12" fill="#222"/><circle cx="1866" cy="1029" r="4" fill="#eee"/>
<path d="M1885 1022l4 6h-3v10h-3v-10h-3zM1889 1026h7l-3 3 2 6h-5z" fill="#777"/>
<path d="M1903 1026h12l-2 12h-8zM1902 1025a7 5 0 0 1 14 0" fill="#eee" stroke="#222"/>

<!-- taskbar -->
<rect y="1039" width="1913" height="41" fill="#41001d"/><rect y="1039" width="1913" height="1" fill="#111"/>
<rect x="393" y="1040" width="48" height="40" fill="#7f0334"/>
<g fill="#f8a2c6"><rect x="103" y="1078" width="40" height="2"/><rect x="152" y="1078" width="40" height="2"/><rect x="250" y="1078" width="40" height="2"/><rect x="393" y="1078" width="48" height="2"/><rect x="495" y="1078" width="41" height="2"/><rect x="544" y="1078" width="40" height="2"/><rect x="593" y="1078" width="40" height="2"/></g>
<path d="M16 1053l7-1v7h-7zM24 1052l9-1v8h-9zM16 1060h7v7l-7-1zM24 1060h9v8l-9-1z" fill="#fff"/>
<rect x="66" y="1054" width="13" height="13" fill="none" stroke="#fff" stroke-width="1.300"/><path d="M64 1056h-2v10h2M81 1056h2v10h-2" fill="none" stroke="#fff"/>
<circle cx="123" cy="1060" r="11" fill="#e8392c"/><path d="M113 1058c1-6 6-10 12-10 5 0 9 3 10 9-1 6-3 3-7-2-4-2-6 3-5 5-3 3-7 2-10-2z" fill="#ff9d1e"/><circle cx="123" cy="1062" r="5" fill="#57217f"/>
<circle cx="172" cy="1060" r="11" fill="#1f9c3f"/><path d="M172 1049a11 11 0 0 1 10 6h-10a5 5 0 0 0-5 2l-5-6a11 11 0 0 1 10-2z" fill="#e23c30"/><path d="M182 1055a11 11 0 0 1-9 16l5-8a5 5 0 0 0 0-7z" fill="#fcc934"/><circle cx="172" cy="1060" r="5.500" fill="#fff"/><circle cx="172" cy="1060" r="4" fill="#4c8df0"/>
<rect x="212" y="1048" width="18" height="24" fill="#fff"/><rect x="214" y="1050" width="14" height="4" fill="#41001d"/><g fill="#41001d"><rect x="215" y="1057" width="2.500" height="2.500"/><rect x="220" y="1057" width="2.500" height="2.500"/><rect x="225" y="1057" width="2.500" height="2.500"/><rect x="215" y="1062" width="2.500" height="2.500"/><rect x="220" y="1062" width="2.500" height="2.500"/><rect x="225" y="1062" width="2.500" height="2.500"/><rect x="215" y="1067" width="2.500" height="2.500"/><rect x="220" y="1067" width="2.500" height="2.500"/><rect x="225" y="1067" width="2.500" height="2.500"/></g>
<path d="M259 1052h8l2 3h12v16h-22z" fill="#f4d478"/><path d="M259 1057h22" stroke="#d8a838"/><rect x="265" y="1063" width="10" height="9" fill="#3b9bd8"/><path d="M264 1065l6-5 6 5" fill="#3b9bd8"/>
<rect x="307" y="1048" width="24" height="24" rx="4" fill="#555"/><circle cx="318" cy="1057" r="6" fill="none" stroke="#fff" stroke-width="2"/><path d="M315 1062v7M321 1062l5 6h-5" fill="none" stroke="#fff" stroke-width="1.500"/>
<circle cx="368" cy="1060" r="12" fill="#fff"/><path d="M363 1054h10l-2 3-5 5 3 3h5l-4 4h-5l-5-5z" fill="#2b7de0"/>
<rect x="405" y="1048" width="24" height="24" fill="#d8d8d8"/><path d="M410 1060c0-6 6-9 10-7 5 2 5 8 0 10-3 1-5-1-5-3s4-3 5-1M416 1068h2" fill="none" stroke="#222" stroke-width="2.600"/>
<rect x="454" y="1048" width="24" height="24" fill="#d8d8d8"/><path d="M459 1061c0-5 6-8 10-6 5 2 4 8 0 9-4 1-6-2-4-4 2-1 4-1 4 1" fill="none" stroke="#555" stroke-width="2.200"/>
<path d="M504 1060a11 12 0 0 1 22-2l-9 18z" fill="#2f9be0"/><path d="M509 1060l13-6-3 11-4-3z" fill="#fff"/><circle cx="521" cy="1069" r="7" fill="#1a1f44"/><text x="521" y="1073" text-anchor="middle" style="font-size:10px;fill:#fff">1</text>
<path d="M554 1048h19v24l-4-3h-15z" fill="#7289da"/><path d="M558 1062c3-7 9-7 12 0-2 2-4 1-5 0h-2c-1 1-3 2-5 0z" fill="#fff"/><circle cx="561" cy="1060" r="1.300" fill="#7289da"/><circle cx="567" cy="1060" r="1.300" fill="#7289da"/>
<path d="M604 1051h18v16l-7 7h-11z" fill="#fff"/><path d="M622 1064v6l-5 4-2-5z" fill="#111"/>
<!-- tray -->
<circle cx="1618" cy="1054" r="3" fill="none" stroke="#fff"/><circle cx="1611" cy="1060" r="3" fill="none" stroke="#fff"/><path d="M1607 1067c1-3 6-3 8 0M1615 1060c1-2 5-2 7 0" fill="none" stroke="#fff"/>
<path d="M1644 1063l6-6 6 6" fill="none" stroke="#fff" stroke-width="1.300"/>
<path d="M1666 1063a4 4 0 0 1 3-5 6 6 0 0 1 9-1 5 5 0 0 1 4 6z" fill="#fff"/>
<rect x="1691" y="1054" width="15" height="10" fill="none" stroke="#fff"/><rect x="1690" y="1054" width="7" height="7" fill="#41001d" stroke="#fff"/><path d="M1698 1064v4M1693 1068h11" stroke="#fff"/>
<path d="M1715 1057h3l4-3v12l-4-3h-3z" fill="none" stroke="#fff"/><path d="M1724 1057c1 2 1 5 0 6M1726 1055c2 3 2 8 0 10M1728 1053c3 4 3 10 0 14" fill="none" stroke="#8a5070"/>
<path d="M1742 1066l9-12c3-3 6 0 4 3l-9 11c-3 2-6-1-4-2M1748 1062l4 3" fill="none" stroke="#fff"/>
<text x="1783" y="1056" text-anchor="middle" style="font-size:11.500px;fill:#f0e8ec">ENG</text><text x="1783" y="1074" text-anchor="middle" style="font-size:11.500px;fill:#f0e8ec">SV</text>
<text x="1835" y="1055" text-anchor="middle" style="font-size:11.500px;fill:#f0e8ec">17:29</text><text x="1835" y="1074" text-anchor="middle" style="font-size:11.500px;fill:#f0e8ec">12-May-18</text>
<path d="M1880 1053h15v12h-6l-2 3-2-3h-5z" fill="none" stroke="#fff" stroke-width="1.200"/>
</svg>

<!-- colour wheel -->
<div class="wheel" style="left:65px;top:889px;width:132px;height:132px;background:conic-gradient(#e6f000 0deg,#7fe000 35deg,#10e010 70deg,#00e8a0 105deg,#00e8f0 130deg,#0060f0 165deg,#1010e8 185deg,#8000e8 220deg,#f010f0 250deg,#f00090 285deg,#f01010 305deg,#f06000 325deg,#f0a000 345deg,#e6f000 360deg);-webkit-mask:radial-gradient(circle,transparent 54px,#000 55px,#000 65.500px,transparent 66px);mask:radial-gradient(circle,transparent 54px,#000 55px,#000 65.500px,transparent 66px)"></div>
<div style="position:absolute;left:77px;top:912px;width:11px;height:7px;background:#e82010;border:2px solid #fff;outline:1px solid #222;transform:rotate(-40deg)"></div>
<div style="position:absolute;left:97px;top:921px;width:69px;height:68px;background:linear-gradient(to top,#000,rgba(0,0,0,0)),linear-gradient(to right,#fff,#f02000);outline:1px solid #333"></div>
<div style="position:absolute;left:139px;top:940px;width:8px;height:8px;border-radius:50%;border:1px solid #fff;outline:1px solid rgba(0,0,0,.4)"></div>
<div class="wheel" style="left:67px;top:870px;width:16px;height:16px;background:conic-gradient(#e6f000,#10e010,#00e8f0,#1010e8,#f010f0,#f01010,#e6f000)"></div>
<div class="wheel" style="left:71px;top:874px;width:8px;height:8px;background:#555"></div>
<div class="wheel" style="left:198px;top:1017px;width:17px;height:17px;background:conic-gradient(#e6f000,#10e010,#00e8f0,#1010e8,#f010f0,#f01010,#e6f000)"></div>
<div class="wheel" style="left:202px;top:1021px;width:9px;height:9px;background:#553"></div>
</body></html>
